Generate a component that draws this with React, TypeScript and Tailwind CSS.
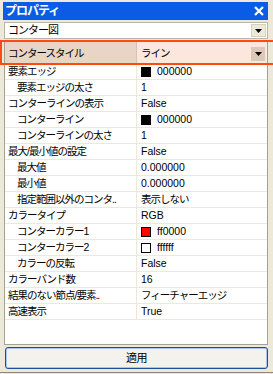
import React from "react";

type Row = {
  name: string;
  indent: boolean;
  value: string;
  swatch?: string;
  jp?: boolean;
};

const rows: Row[] = [
  { name: "要素エッジ", indent: false, value: "000000", swatch: "#000000" },
  { name: "要素エッジの太さ", indent: true, value: "1" },
  { name: "コンターラインの表示", indent: false, value: "False" },
  { name: "コンターライン", indent: true, value: "000000", swatch: "#000000" },
  { name: "コンターラインの太さ", indent: true, value: "1" },
  { name: "最大/最小値の設定", indent: false, value: "False" },
  { name: "最大値", indent: true, value: "0.000000" },
  { name: "最小値", indent: true, value: "0.000000" },
  { name: "指定範囲以外のコンタ..", indent: true, value: "表示しない", jp: true },
  { name: "カラータイプ", indent: false, value: "RGB" },
  { name: "コンターカラー1", indent: true, value: "ff0000", swatch: "#ff0000" },
  { name: "コンターカラー2", indent: true, value: "ffffff", swatch: "#ffffff" },
  { name: "カラーの反転", indent: true, value: "False" },
  { name: "カラーバンド数", indent: false, value: "16" },
  { name: "結果のない節点/要素..", indent: false, value: "フィーチャーエッジ", jp: true },
  { name: "高速表示", indent: false, value: "True" },
];

function Arrow() {
  return (
    <svg width="7" height="4" viewBox="0 0 7 4">
      <path d="M0 0 H7 L3.5 4 Z" fill="#000" />
    </svg>
  );
}

export default function App() {
  return (
    <div className="relative w-[273px] h-[374px] overflow-hidden bg-[#ece9d8] font-['Liberation_Sans','Noto_Sans_CJK_JP',sans-serif] text-[10.5px] text-black">
      <div className="flex flex-col pl-[3px] pr-[5px] pt-[2px]">
        {/* title bar */}
        <div className="h-[18px] bg-[#0a5ce4] flex items-center justify-between pl-[2px] pr-[4px]">
          <span className="text-white font-bold text-[12px] tracking-[-1px] leading-none">プロパティ</span>
          <svg width="10" height="10" viewBox="0 0 10 10">
            <path d="M1 1 L9 9 M9 1 L1 9" stroke="#fff" strokeWidth="2.2" />
          </svg>
        </div>
        {/* combo */}
        <div className="mt-[2px] ml-[1px] h-[17px] bg-white border border-[#b9b6a8] flex items-center justify-between pl-[3px] pr-[1px]">
          <span className="text-[11px] tracking-[-1px] leading-none">コンター図</span>
          <div className="w-[15px] h-[13px] bg-[#ece9d8] border border-[#d6d2c2] flex items-center justify-center">
            <Arrow />
          </div>
        </div>
        {/* property grid */}
        <div className="mt-[2px] ml-[1px] h-[304px] bg-white border-l border-r border-b border-[#a5a293] flex flex-col">
          <div className="h-[23px] flex shrink-0">
            <div className="w-[132px] bg-[#e9d5c5] border-r border-[#d8c3b3] flex items-center pl-[3px] pt-[3px]">
              <span className="tracking-[-1px]">コンタースタイル</span>
            </div>
            <div className="flex-1 bg-[#fbe7de] flex items-center justify-between pl-[4px] pr-[2px] pt-[3px]">
              <span className="tracking-[-1px]">ライン</span>
              <div className="w-[14px] h-[14px] bg-[#dcc8b8] flex items-center justify-center">
                <Arrow />
              </div>
            </div>
          </div>
          {rows.map((r) => (
            <div key={r.name} className="h-[16px] flex shrink-0 border-b border-[#ece9dc]">
              <div
                className={
                  "w-[132px] border-r border-[#ece9dc] flex items-center overflow-hidden whitespace-nowrap tracking-[-1px] " +
                  (r.indent ? "pl-[12px]" : "pl-[3px]")
                }
              >
                {r.name}
              </div>
              <div className="flex-1 flex items-center pl-[4px] whitespace-nowrap">
                {r.swatch && (
                  <span
                    className="w-[10px] h-[10px] border border-black mr-[6px] shrink-0"
                    style={{ backgroundColor: r.swatch }}
                  />
                )}
                <span className={r.jp ? "tracking-[-1px]" : "text-[10.5px]"}>{r.value}</span>
              </div>
            </div>
          ))}
        </div>
        {/* button */}
        <div className="mt-[2px] ml-[2px] h-[22px] rounded-[3px] border border-[#1f4f9c] bg-[#f3f2ec] flex items-center justify-center shadow-[inset_0_0_0_1px_#a9c4ef]">
          <span className="text-[11px] tracking-[-0.5px]">適用</span>
        </div>
      </div>
      <div className="absolute left-0 bottom-[1px] w-[273px] h-[1px] bg-[#8a887d]" />
      <div className="absolute left-0 top-[40px] w-[275px] h-[25px] border-t-2 border-b-2 border-l-2 border-[#ff4a12]" />
    </div>
  );
}
